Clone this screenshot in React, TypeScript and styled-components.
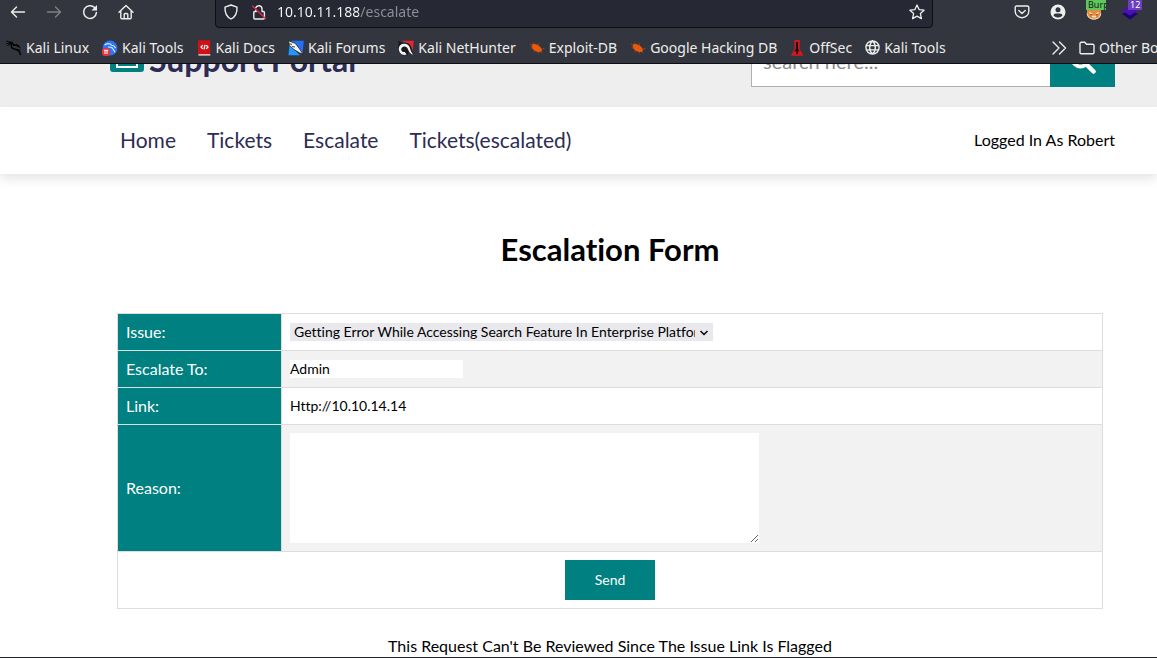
import React from "react";
import styled, { createGlobalStyle } from "styled-components";

const uiFont = `"Noto Sans", sans-serif`;
const siteFont = `Lato, "Open Sans", sans-serif`;
const teal = "#008080";
const navy = "#2c2c54";

const GlobalStyle = createGlobalStyle`
  *, *::before, *::after { box-sizing: border-box; }
  body { margin: 0; background: #fff; }
  button, input, select, textarea { font: inherit; color: inherit; margin: 0; border: 0; border-radius: 0; outline: 0; }
  svg { display: block; flex: none; }
`;

const Shell = styled.div`
  display: flex;
  flex-direction: column;
  height: 100vh;
  overflow: hidden;
  border-bottom: 1px solid #23252e;
`;

/* Browser chrome */
const Chrome = styled.div`
  flex: none;
  background: #33363e;
  color: #eeeeec;
  border-bottom: 1px solid #0c0c13;
  font-family: ${uiFont};
`;

const Toolbar = styled.div`
  display: flex;
  align-items: flex-end;
  height: 28px;
  overflow: hidden;
  padding-right: 9px;
`;

const ToolButton = styled.button<{ $dim?: boolean }>`
  position: relative;
  display: flex;
  align-items: center;
  justify-content: center;
  width: 36px;
  height: 32px;
  padding: 0;
  background: none;
  opacity: ${(p) => (p.$dim ? 0.4 : 1)};
`;

const AddressBar = styled.div`
  display: flex;
  align-items: center;
  flex: 1;
  min-width: 0;
  height: 32px;
  margin: 0 71px;
  padding: 0 7px;
  gap: 12px;
  background: #262833;
  border: 1px solid #0c0c13;
  border-radius: 4px;
`;

const AddressInput = styled.input`
  flex: 1;
  min-width: 0;
  margin-left: -2px;
  padding: 0;
  font-size: 14px;
  line-height: 20px;
  color: transparent;
  background: linear-gradient(90deg, #fbfbfe 82px, #8f9099 82px);
  background-clip: text;
`;

const Badge = styled.span<{ $bg: string; $fg: string }>`
  position: absolute;
  top: 4px;
  left: 10px;
  width: 20px;
  overflow: hidden;
  padding-left: 2px;
  font: 9px/10px ${uiFont};
  text-align: left;
  background: ${(p) => p.$bg};
  color: ${(p) => p.$fg};
`;

const CountBadge = styled(Badge)`
  left: 16px;
  width: 14px;
`;

const Bookmarks = styled.nav`
  display: flex;
  align-items: center;
  gap: 13px;
  height: 35px;
  padding: 4px 0 0 6px;
  overflow: hidden;
`;

const Bookmark = styled.a`
  display: flex;
  align-items: center;
  flex: none;
  gap: 4px;
  color: inherit;
  font-size: 14px;
  line-height: 20px;
  text-decoration: none;
  white-space: nowrap;
`;

const Overflow = styled.div`
  display: flex;
  align-items: center;
  flex: none;
  gap: 12px;
  width: 106px;
  margin-left: auto;
  overflow: hidden;
`;

const MoreButton = styled.button`
  padding: 0;
  background: none;
`;

/* Site */
const Site = styled.div`
  flex: 1;
  min-height: 0;
  overflow: hidden;
  font-family: ${siteFont};
  font-variant-ligatures: none;
  color: #000;
`;

const Header = styled.header`
  display: flex;
  align-items: flex-end;
  justify-content: space-between;
  height: 43px;
  overflow: hidden;
  padding: 0 42px 20px 110px;
  background: #eee;
`;

const Logo = styled.a`
  display: flex;
  align-items: center;
  gap: 5px;
  height: 56px;
  color: ${navy};
  font-size: 32px;
  font-weight: 700;
  text-decoration: none;
  white-space: nowrap;
`;

const SearchForm = styled.form`
  display: flex;
  height: 52px;
`;

const SearchInput = styled.input`
  width: 299px;
  padding: 0 11px;
  font-size: 20px;
  background: #fff;
  border: 1px solid #b0b0b0;
  border-right: 0;
  &::placeholder { color: #8c8c8c; }
`;

const SearchButton = styled.button`
  display: flex;
  align-items: center;
  justify-content: center;
  width: 65px;
  padding: 0;
  background: ${teal};
  color: #fff;
`;

const NavBar = styled.nav`
  display: flex;
  align-items: center;
  gap: 31px;
  height: 67px;
  padding: 0 42px 2px 120px;
  background: #fff;
  box-shadow: 0 5px 10px rgba(0, 0, 0, 0.1);
`;

const NavLink = styled.a`
  color: ${navy};
  font-size: 21px;
  line-height: 28px;
  text-decoration: none;
`;

const LoggedIn = styled.span`
  margin-left: auto;
  font-size: 16px;
  line-height: 24px;
`;

const Main = styled.main`
  padding: 0 54px 0 117px;
`;

const Title = styled.h1`
  margin: 55px 0 44px;
  font-size: 31px;
  line-height: 40px;
  text-align: center;
`;

const FormTable = styled.table`
  width: 100%;
  border-collapse: collapse;
`;

const Row = styled.tr`
  height: 37px;
  &:nth-child(even) { background: #f2f2f2; }
`;

const LabelCell = styled.th`
  width: 164px;
  padding: 8px;
  border: 1px solid #ddd;
  background: ${teal};
  color: #fff;
  font-size: 16px;
  line-height: 18px;
  font-weight: 400;
  text-align: left;
`;

const FieldCell = styled.td`
  padding: 8px;
  border: 1px solid #ddd;
  font-size: 14px;
  line-height: 18px;
`;

const SendCell = styled(FieldCell)`
  background: #fff;
  text-align: center;
`;

const SelectWrap = styled.div`
  position: relative;
  width: 423px;
  svg { position: absolute; right: 5px; top: 6px; pointer-events: none; }
`;

const Select = styled.select`
  display: block;
  width: 100%;
  height: 18px;
  padding: 0 18px 0 4px;
  appearance: none;
  background: #e9e9ed;
`;

const TextInput = styled.input`
  display: block;
  width: 173px;
  height: 18px;
  padding: 0;
  background: #fff;
`;

const TextArea = styled.textarea`
  display: block;
  width: 469px;
  height: 110px;
  padding: 2px;
  background: #fff;
  resize: both;
`;

const SendButton = styled.button`
  display: block;
  width: 90px;
  height: 40px;
  margin: 0 auto;
  padding: 0;
  background: ${teal};
  color: #fff;
`;

const Notice = styled.p`
  margin: 25px 0 0;
  font-size: 16px;
  line-height: 24px;
  text-align: center;
`;

/* Icons */
const Line = ({ d, w = 1.4, size = 16 }: { d: string; w?: number; size?: number }) => (
  <svg width={size} height={size} viewBox="0 0 16 16" fill="none" stroke="currentColor" strokeWidth={w} strokeLinecap="round" strokeLinejoin="round">
    <path d={d} />
  </svg>
);

const Reload = () => (
  <svg width="16" height="16" viewBox="0 0 16 16" fill="none" stroke="currentColor" strokeWidth="1.5">
    <path d="M12.6 3.6A6.4 6.4 0 1 0 14.4 8.6" strokeLinecap="round" />
    <path d="M15 1v5.6H9.4z" fill="currentColor" stroke="none" />
  </svg>
);

const BrokenLock = () => (
  <svg width="16" height="16" viewBox="0 0 16 16" fill="none" strokeWidth="1.4" strokeLinecap="round">
    <path d="M4.800 3.800a3.200 3.200 0 0 1 6.200 1v2.500M4.800 7V5.800M11 7.500h1.400a1 1 0 0 1 1 1V14a1 1 0 0 1-1 1H3.800a1 1 0 0 1-1-1V8.500a1 1 0 0 1 1-1h1.500" stroke="#eeeeec" />
    <path d="M1.500 2l13 12.500" stroke="#e22850" />
  </svg>
);

const Pocket = () => (
  <svg width="16" height="16" viewBox="0 0 16 16" fill="none" stroke="currentColor" strokeWidth="1.4" strokeLinecap="round" strokeLinejoin="round">
    <path d="M2.500 2h11a1.300 1.300 0 0 1 1.300 1.300v3.900a6.800 6.600 0 0 1-13.600 0V3.300A1.300 1.300 0 0 1 2.500 2z" />
    <path d="M4.800 6.400L8 9.400l3.200-3" />
  </svg>
);

const Account = () => (
  <svg width="16" height="16" viewBox="0 0 16 16">
    <circle cx="8" cy="8" r="7.500" fill="#eeeeec" />
    <circle cx="8" cy="5.800" r="2.500" fill="#33363e" />
    <path d="M3.600 11.800c0-1.600 1-2.300 2.400-2.300h4c1.400 0 2.400.7 2.400 2.300A6 6 0 0 1 8 13.400a6 6 0 0 1-4.400-1.600z" fill="#33363e" />
  </svg>
);

const Fox = () => (
  <svg width="16" height="16" viewBox="0 0 16 16">
    <path d="M1 2l4 2h6l4-2v7c0 4-3 6.500-7 6.500S1 13 1 9z" fill="#e88a3c" />
    <path d="M.8 8.500l1.200 2c.5 3 3 4 6 4s5.500-1 6-4l1.200-2c.3 4.500-3 7-7.200 7s-7.500-2.500-7.200-7z" fill="#f4dfc6" />
    <path d="M3.500 8.500l2.500 1.500M12.500 8.500L10 10M6 12.500h4" stroke="#f8ead8" strokeWidth="1.300" />
    <path d="M4.500 10.500l1.500.5M11.500 10.500L10 11" stroke="#6b4022" strokeWidth="1" />
  </svg>
);

const Layers = () => (
  <svg width="16" height="16" viewBox="0 0 16 16">
    <path d="M0 10l8-4 8 4-8 5.500z" fill="#20056e" />
    <path d="M0 6.500L8 2l8 4.500-8 5z" fill="#4a11b5" />
  </svg>
);

const Dragon = () => (
  <svg width="16" height="16" viewBox="0 0 16 16" fill="none" stroke="#050505" strokeLinecap="round" strokeLinejoin="round">
    <path d="M.6 1.200l3 .8 3.200.2M.5 3.600l3.500-.4M1.500 5.500l3-1.300" strokeWidth="1" />
    <path d="M4 2.600c2 .2 3 1.200 3.500 2.400l3 .1 2.200 1.200" strokeWidth="1.800" />
    <path d="M5.500 4.500c-.8 2.500.3 4 3 4.600 3 .6 5.200 1.600 6 5.400" strokeWidth="1.500" />
    <path d="M10.500 5l3.500 2.800M11 9.500l3 .5" strokeWidth="1" />
  </svg>
);

const KaliTools = () => (
  <svg width="16" height="16" viewBox="0 0 16 16">
    <circle cx="8" cy="8" r="7.400" fill="#2b76f6" />
    <path d="M2.500 5c3-1.800 5.500-1.800 7.200.3 2 .2 3.300 1.200 3.800 2.700M6 7c3-.2 5 1 5.500 3 .8.700 1.300 1.400 1.500 2.400" fill="none" stroke="#dce9ff" strokeWidth="1.100" />
    <rect y="8" width="8" height="8" rx="3" fill="#e3343a" />
    <path d="M1.800 10.300h4.400M3 10.300V14M5 10.300V14" stroke="#fff" strokeWidth="1" />
  </svg>
);

const Docs = () => (
  <svg width="15" height="16" viewBox="0 0 15 16">
    <path d="M2 .2h11.300V14H2.500L1 15.500V1.200a1 1 0 0 1 1-1z" fill="#d01217" />
    <path d="M1.500 14h11.800v1.700H1.500z" fill="#dcb9b6" />
    <path d="M5.800 5.200L4 7l1.800 1.800M9.200 5.200L11 7 9.200 8.800M8 4.800L7 9.400" stroke="#fff" strokeWidth="1.200" fill="none" />
  </svg>
);

const Forums = () => (
  <svg width="16" height="16" viewBox="0 0 16 16">
    <path d="M3 .8h12.800L14.600 13 5 5z" fill="#2470f5" />
    <path d="M1.500 4.500l10.500 10.700H.5z" fill="#2196ff" />
    <path d="M.5.8l3 1.200 3.500 1.200 3.200 3.800 5 7.300-3.700-1.500L6 9.500 1.500 5.500z" fill="#f2f2f2" stroke="#17191d" strokeWidth=".7" />
    <path d="M1.500 3.800l2.500.7M4 6.500l3 .5" stroke="#17191d" strokeWidth=".8" />
  </svg>
);

const NetHunter = () => (
  <svg width="16" height="16" viewBox="0 0 16 16">
    <path d="M4 .8h11.800L14.600 12 11 5z" fill="#e8262e" />
    <path d="M.5.8l4.500 2.500c4-1.500 7.500.5 8.500 4.500l2 7.400-5-3.200-1 3.200H5L.3 12z" fill="#17191d" />
    <path d="M.8 8.500C1 4.800 4 3.200 7 3.800c3.500.6 4.800 3 5.300 5.400.6 2 1.500 3.300 3 5.500-2.800-.8-4.300-2.500-5-4.700C9.600 7.600 8 6.300 6 6.600 4 7 3.200 8.300 3.200 9.800c.3 1.800 2 2.500 3.600 2.200l1.800 2.600C4.500 16 .5 13 .8 8.500z" fill="#f4f4f4" />
  </svg>
);

const Bug = () => (
  <svg width="16" height="16" viewBox="0 0 16 16">
    <path d="M3 4.500c3-1.500 9 1.500 10 5.500-.5 2.500-3 2.500-5.500 1.500C4.500 10.500 2 8 3 4.500z" fill="#e8590c" />
    <path d="M1 4l2.500 1.500M4.500 2.500l.8 2M9 3l.5 2.500M1.500 8l2.500-.5M5 12l.8-2M9.500 13.500l-.8-2M13 13l-1.500-2M15.500 8.500L12.500 9" stroke="#b3480f" strokeWidth=".8" />
  </svg>
);

const OffSec = () => (
  <svg width="15" height="16" viewBox="0 0 15 16">
    <path d="M4.500 0h5.200v9L13.500 15.800H1L4.500 9z" fill="#d8161d" />
    <path d="M6 2h2v6.500l1.500 3-1.500-.3V14H6.200v-2.800l-1.700.3L6 8.500z" fill="#1c1012" />
  </svg>
);

const Globe = () => (
  <Line size={15} w={1.5} d="M8 1a7 7 0 1 0 0 14A7 7 0 1 0 8 1zM8 1C4 4.500 4 11.500 8 15M8 1c4 3.500 4 10.500 0 14M1.300 6h13.400M1.300 10.500h13.400" />
);

const LogoMark = () => (
  <svg width="34" height="28" viewBox="0 0 34 28">
    <rect width="34" height="27" rx="3" fill={teal} />
    <rect x="7" y="6" width="20" height="16" fill="none" stroke="#fff" strokeWidth="2" />
  </svg>
);

const Magnifier = () => (
  <svg width="26" height="26" viewBox="0 0 26 26" fill="none" stroke="currentColor">
    <circle cx="10.500" cy="10.500" r="8" strokeWidth="4" />
    <path d="M16.500 16.500l7 7" strokeWidth="4.500" strokeLinecap="round" />
  </svg>
);

const bookmarks = [
  { label: "Kali Linux", icon: <Dragon /> },
  { label: "Kali Tools", icon: <KaliTools /> },
  { label: "Kali Docs", icon: <Docs /> },
  { label: "Kali Forums", icon: <Forums /> },
  { label: "Kali NetHunter", icon: <NetHunter /> },
  { label: "Exploit-DB", icon: <Bug /> },
  { label: "Google Hacking DB", icon: <Bug /> },
  { label: "OffSec", icon: <OffSec /> },
  { label: "Kali Tools", icon: <Globe /> },
];

const links = ["Home", "Tickets", "Escalate", "Tickets(escalated)"];

export default function App() {
  return (
    <>
      <GlobalStyle />
      <Shell>
        <Chrome>
          <Toolbar>
            <ToolButton aria-label="Back"><Line d="M14.500 8H1.500M6.500 3l-5 5 5 5" /></ToolButton>
            <ToolButton aria-label="Forward" $dim><Line d="M1.500 8h13M9.500 3l5 5-5 5" /></ToolButton>
            <ToolButton aria-label="Reload"><Reload /></ToolButton>
            <ToolButton aria-label="Home">
              <Line d="M1 8.200L8 1.500l7 6.700M2.800 7v6.800a1 1 0 0 0 1 1h8.400a1 1 0 0 0 1-1V7M6.200 14.500v-4a1 1 0 0 1 1-1h1.600a1 1 0 0 1 1 1v4" />
            </ToolButton>
            <AddressBar>
              <Line d="M8 1l6 2.200c.3 5-1.200 9.300-6 11.800C3.200 12.500 1.700 8.200 2 3.200z" />
              <BrokenLock />
              <AddressInput aria-label="Address" defaultValue="10.10.11.188/escalate" />
              <Line d="M8 1l2.100 4.600 5 .6-3.700 3.400 1 5L8 12.100l-4.400 2.500 1-5L.9 6.200l5-.6z" w={1.3} />
            </AddressBar>
            <ToolButton aria-label="Save to Pocket"><Pocket /></ToolButton>
            <ToolButton aria-label="Account"><Account /></ToolButton>
            <ToolButton aria-label="Proxy">
              <Fox />
              <Badge $bg="#5fc75f" $fg="#10240f">Burp</Badge>
            </ToolButton>
            <ToolButton aria-label="Extension">
              <Layers />
              <CountBadge $bg="#6a3fc0" $fg="#fff">12</CountBadge>
            </ToolButton>
          </Toolbar>
          <Bookmarks aria-label="Bookmarks">
            {bookmarks.map((b, i) => (
              <Bookmark key={i} href="#">{b.icon}{b.label}</Bookmark>
            ))}
            <Overflow>
              <MoreButton aria-label="More bookmarks"><Line d="M2 2l6 6-6 6M8.500 2l6 6-6 6" /></MoreButton>
              <Bookmark href="#">
                <Line d="M1 3.500a1.200 1.200 0 0 1 1.200-1.200h3.600l1.700 2h6.300A1.200 1.200 0 0 1 15 5.500v7a1.200 1.200 0 0 1-1.200 1.200H2.200A1.200 1.200 0 0 1 1 12.500z" />
                Other Bookmarks
              </Bookmark>
            </Overflow>
          </Bookmarks>
        </Chrome>
        <Site>
          <Header>
            <Logo href="#"><LogoMark />Support Portal</Logo>
            <SearchForm>
              <SearchInput type="search" aria-label="Search" placeholder="search here..." />
              <SearchButton type="button" aria-label="Search"><Magnifier /></SearchButton>
            </SearchForm>
          </Header>
          <NavBar>
            {links.map((l) => <NavLink key={l} href="#">{l}</NavLink>)}
            <LoggedIn>Logged In As Robert</LoggedIn>
          </NavBar>
          <Main>
            <Title>Escalation Form</Title>
            <form>
              <FormTable>
                <tbody>
                  <Row>
                    <LabelCell scope="row"><label htmlFor="issue">Issue:</label></LabelCell>
                    <FieldCell>
                      <SelectWrap>
                        <Select id="issue">
                          <option>Getting Error While Accessing Search Feature In Enterprise Platform</option>
                        </Select>
                        <svg width="8" height="8" viewBox="0 0 8 8" fill="none" stroke="#000" strokeWidth="1.500">
                          <path d="M.5 2L4 5.500 7.500 2" />
                        </svg>
                      </SelectWrap>
                    </FieldCell>
                  </Row>
                  <Row>
                    <LabelCell scope="row"><label htmlFor="to">Escalate To:</label></LabelCell>
                    <FieldCell><TextInput id="to" defaultValue="Admin" /></FieldCell>
                  </Row>
                  <Row>
                    <LabelCell scope="row"><label htmlFor="link">Link:</label></LabelCell>
                    <FieldCell><TextInput id="link" defaultValue="Http://10.10.14.14" /></FieldCell>
                  </Row>
                  <Row>
                    <LabelCell scope="row"><label htmlFor="reason">Reason:</label></LabelCell>
                    <FieldCell><TextArea id="reason" /></FieldCell>
                  </Row>
                  <Row>
                    <SendCell colSpan={2}><SendButton type="button">Send</SendButton></SendCell>
                  </Row>
                </tbody>
              </FormTable>
            </form>
            <Notice>This Request Can't Be Reviewed Since The Issue Link Is Flagged</Notice>
          </Main>
        </Site>
      </Shell>
    </>
  );
}
